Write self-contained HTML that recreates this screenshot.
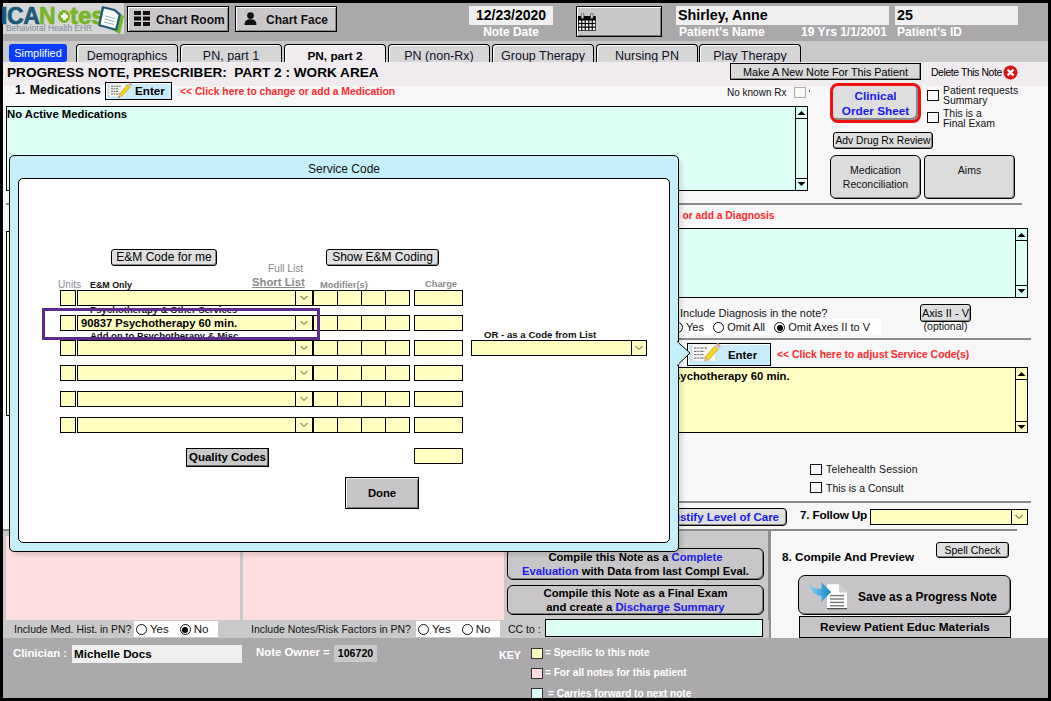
<!DOCTYPE html>
<html><head><meta charset="utf-8">
<style>
*{margin:0;padding:0;box-sizing:border-box}
html,body{width:1051px;height:701px;overflow:hidden;background:#000;font-family:"Liberation Sans",sans-serif;color:#000}
.a{position:absolute}
.b{font-weight:bold}
.nw{white-space:nowrap}
.tab{position:absolute;top:44px;height:18px;width:102px;border:1px solid #000;border-bottom:none;border-radius:4px 4px 0 0;box-shadow:inset 1px 1px 0 #fff;background:#d6d6d6;font-size:12.5px;text-align:center;line-height:22px;color:#101028;overflow:hidden}
.btn{position:absolute;border:1px solid #000;background:#d7d7d7;text-align:center}
.yl{background:#ffffc2}
.dots{background-color:#ffffc2;background-image:radial-gradient(circle at 1.5px 1.5px,rgba(255,255,255,0.8) 0.7px,transparent 0.9px),radial-gradient(circle at 5.5px 5.5px,rgba(255,255,255,0.8) 0.7px,transparent 0.9px);background-size:8px 8px,8px 8px}
.tl{background:#dcfff6}
.rd{display:inline-block;width:11px;height:11px;border:1px solid #111;border-radius:50%;background:#fff;vertical-align:-2px;margin-right:3px;position:relative}
.rd.on::after{content:"";position:absolute;left:1.5px;top:1.5px;width:6px;height:6px;border-radius:50%;background:#000}
.cb{position:absolute;width:12px;height:11px;border:1px solid #111;background:transparent}
</style></head><body>
<div class="a" id="page" style="left:3px;top:3px;width:1045px;height:695px;background:#f7f7f7;overflow:hidden">
</div>
<!-- header -->
<div class="a" style="left:3px;top:3px;width:1045px;height:38px;background:#aaa8aa"></div>
<div class="a" style="left:3px;top:3px;width:121px;height:31px;background:#d6d6d6"></div>
<div class="a" style="left:3px;top:41px;width:1045px;height:21px;background:#c9c9c9"></div>
<div class="a" style="left:3px;top:62px;width:1045px;height:24px;background:#efebef"></div>
<div class="a" style="left:3px;top:638px;width:1045px;height:60px;background:#aba9ab"></div>

<!-- logo -->
<div class="a b nw" style="left:1px;top:3px;font-size:23px;line-height:27px;letter-spacing:-0.4px;color:#1b5a78;-webkit-text-stroke:0.7px #1b5a78">ICA</div>
<div class="a b nw" style="left:39px;top:3px;font-size:23px;line-height:27px;letter-spacing:-0.6px;color:#78b42a;-webkit-text-stroke:0.7px #78b42a">N</div>
<div class="a" style="left:58px;top:10px;width:12px;height:13px;border-radius:50%;background:#78b42a"></div>
<div class="a" style="left:63px;top:13px;width:2.5px;height:7px;background:#fff"></div>
<div class="a" style="left:60.5px;top:15.3px;width:7.5px;height:2.5px;background:#fff"></div>
<div class="a b nw" style="left:70px;top:2px;font-size:24px;line-height:27px;letter-spacing:-0.1px;color:#78b42a;-webkit-text-stroke:0.8px #78b42a">tes</div>
<div class="a nw" style="left:6px;top:23px;font-size:8.4px;line-height:10px;color:#7a8b97">Behavioral Health EHR</div>
<svg class="a" style="left:96px;top:4px" width="29" height="30" viewBox="0 0 29 30">
<polygon points="6,21 24,30 28,12 22,9" fill="#78b42a"/>
<polygon points="6,2 19,5 25,10 21,27 2,22" fill="#1b5a78"/>
<polygon points="8,4.5 18,7 22.5,11 19.3,24.5 4.5,20.5" fill="#fff"/>
<line x1="9" y1="12" x2="19" y2="14.5" stroke="#8ab0cc" stroke-width="1"/>
<line x1="8.5" y1="15" x2="18.5" y2="17.5" stroke="#8ab0cc" stroke-width="1"/>
<line x1="8" y1="18" x2="18" y2="20.5" stroke="#8ab0cc" stroke-width="1"/>
</svg>
<!-- chart room / face -->
<div class="btn" style="left:127px;top:6px;width:102px;height:26px;background:#c9c7c9;border:1px solid #000;box-shadow:inset 1px 1px 0 #fff, inset -1px -1px 0 #888"></div>
<svg class="a" style="left:134px;top:11px" width="16" height="15" viewBox="0 0 16 15"><rect x="0" y="0" width="7" height="4" fill="#111"/><rect x="9" y="0" width="7" height="4" fill="#111"/><rect x="0" y="5.5" width="7" height="4" fill="#111"/><rect x="9" y="5.5" width="7" height="4" fill="#111"/><rect x="0" y="11" width="7" height="4" fill="#111"/><rect x="9" y="11" width="7" height="4" fill="#111"/></svg>
<div class="a b nw" style="left:156px;top:12px;font-size:12px;line-height:16px;color:#111">Chart Room</div>
<div class="btn" style="left:235px;top:6px;width:102px;height:26px;background:#c9c7c9;border:1px solid #000;box-shadow:inset 1px 1px 0 #fff, inset -1px -1px 0 #888"></div>
<svg class="a" style="left:244px;top:12px" width="13" height="13" viewBox="0 0 13 13"><circle cx="6.5" cy="3.6" r="3.4" fill="#111"/><path d="M0.5,13 C0.5,8.5 3,7.2 6.5,7.2 C10,7.2 12.5,8.5 12.5,13 Z" fill="#111"/></svg>
<div class="a b nw" style="left:266px;top:12px;font-size:12px;line-height:16px;color:#111">Chart Face</div>
<!-- date -->
<div class="a" style="left:469px;top:6px;width:84px;height:19px;background:#efefef"></div>
<div class="a b nw" style="left:469px;top:6px;width:84px;text-align:center;font-size:14px;line-height:19px">12/23/2020</div>
<div class="a b nw" style="left:469px;top:24.5px;width:84px;text-align:center;font-size:11.9px;line-height:15px;color:#fff">Note Date</div>
<div class="btn" style="left:576px;top:6px;width:86px;height:31px;background:#c9c7c9;border:1px solid #000;box-shadow:inset 1px 1px 0 #fff, inset -1px -1px 0 #777"></div>
<svg class="a" style="left:578px;top:13px" width="18" height="18" viewBox="0 0 18 18"><rect x="0" y="3" width="17.8" height="14.8" fill="#000"/><rect x="0.8" y="7.499999999999999" width="2.4" height="2.4" fill="#f4f4f4"/><rect x="4.3" y="7.499999999999999" width="2.4" height="2.4" fill="#f4f4f4"/><rect x="7.8" y="7.499999999999999" width="2.4" height="2.4" fill="#f4f4f4"/><rect x="11.3" y="7.499999999999999" width="2.4" height="2.4" fill="#f4f4f4"/><rect x="14.8" y="7.499999999999999" width="2.4" height="2.4" fill="#f4f4f4"/><rect x="0.8" y="11.100000000000001" width="2.4" height="2.4" fill="#f4f4f4"/><rect x="4.3" y="11.100000000000001" width="2.4" height="2.4" fill="#f4f4f4"/><rect x="7.8" y="11.100000000000001" width="2.4" height="2.4" fill="#f4f4f4"/><rect x="11.3" y="11.100000000000001" width="2.4" height="2.4" fill="#f4f4f4"/><rect x="14.8" y="11.100000000000001" width="2.4" height="2.4" fill="#f4f4f4"/><rect x="0.8" y="14.8" width="2.4" height="2.4" fill="#f4f4f4"/><rect x="4.3" y="14.8" width="2.4" height="2.4" fill="#f4f4f4"/><rect x="7.8" y="14.8" width="2.4" height="2.4" fill="#f4f4f4"/><rect x="11.3" y="14.8" width="2.4" height="2.4" fill="#f4f4f4"/><rect x="14.8" y="14.8" width="2.4" height="2.4" fill="#f4f4f4"/><rect x="3.2" y="0.3" width="2.6" height="5.5" rx="1.2" fill="#ccc" stroke="#333" stroke-width="0.6"/><rect x="12.5" y="0.3" width="2.6" height="5.5" rx="1.2" fill="#ccc" stroke="#333" stroke-width="0.6"/></svg>
<!-- patient name -->
<div class="a" style="left:676px;top:6px;width:213px;height:19px;background:#efefef"></div>
<div class="a b nw" style="left:678px;top:6px;font-size:14.3px;line-height:19px">Shirley, Anne</div>
<div class="a b nw" style="left:679px;top:24.5px;font-size:12px;line-height:15px;color:#fff">Patient’s Name</div>
<div class="a b nw" style="left:801px;top:24.5px;font-size:12px;line-height:15px;color:#fff">19 Yrs 1/1/2001</div>
<div class="a" style="left:895px;top:6px;width:123px;height:19px;background:#efefef"></div>
<div class="a b nw" style="left:897px;top:6px;font-size:14.3px;line-height:19px">25</div>
<div class="a b nw" style="left:897px;top:24.5px;font-size:12px;line-height:15px;color:#fff">Patient’s ID</div>
<!-- tabs -->
<div class="a" style="left:9px;top:44px;width:58px;height:18px;background:#0a3cff;border-radius:3px;color:#fff;font-size:11px;line-height:19px;text-align:center">Simplified</div>
<div class="tab" style="left:76px">Demographics</div>
<div class="tab" style="left:180px">PN, part 1</div>
<div class="tab" style="left:284px;background:#f0ecf0;font-weight:bold;color:#000;font-size:11.8px">PN, part 2</div>
<div class="tab" style="left:388px">PN (non-Rx)</div>
<div class="tab" style="left:492px">Group Therapy</div>
<div class="tab" style="left:596px">Nursing PN</div>
<div class="tab" style="left:699px">Play Therapy</div>
<!-- heading -->
<div class="a b nw" style="left:7px;top:64px;font-size:13.6px;line-height:17px">PROGRESS NOTE, PRESCRIBER:&nbsp; PART 2 : WORK AREA</div>
<div class="btn nw" style="left:730px;top:63px;width:191px;height:17px;background:#d9d9d9;font-size:10.8px;line-height:16px;box-shadow:inset -1px -1px 0 #888">Make A New Note For This Patient</div>
<div class="a nw" style="left:931px;top:64.5px;font-size:10.4px;line-height:16px;letter-spacing:-0.4px">Delete This Note</div>
<svg class="a" style="left:1002.5px;top:64.5px" width="15" height="15" viewBox="0 0 15 15"><circle cx="7.5" cy="7.5" r="7" fill="#e01010"/><path d="M4.5,4.5 L10.5,10.5 M10.5,4.5 L4.5,10.5" stroke="#fff" stroke-width="2.4"/></svg>

<!-- medications -->
<div class="a b nw" style="left:15px;top:82px;font-size:12.3px;line-height:16px;word-spacing:1px">1. Medications</div>
<div class="btn" style="left:105px;top:82px;width:67px;height:18px;background:#c8ecfb;box-shadow:inset 1px 1px 0 #fff"></div>
<svg class="a" style="left:108px;top:82px" width="24" height="17" viewBox="0 0 24 17"><rect x="0" y="1" width="18" height="14" fill="#d8d8d8"/><rect x="1.5" y="1.5" width="16" height="13" fill="#fafafa"/><g stroke="#333" stroke-width="0.8" stroke-dasharray="2 0.6 1.5 0.6 2.5 0.6"><line x1="3" y1="4.2" x2="13" y2="4.2"/><line x1="3" y1="6.8" x2="11" y2="6.8"/><line x1="3" y1="9.4" x2="10" y2="9.4"/><line x1="3" y1="12" x2="13" y2="12"/></g><path d="M11.2,12.2 L19.5,2.8 L22.2,5.2 L13.9,14.6 Z" fill="#f2d41c" stroke="#b08a10" stroke-width="0.5"/><path d="M19.5,2.8 L20.8,1.3 L23.5,3.7 L22.2,5.2 Z" fill="#c8c8c8"/><path d="M20.8,1.3 L21.8,0.3 L24,2.5 L23.5,3.7 Z" fill="#e8907a"/><path d="M11.2,12.2 L13.9,14.6 L10.2,16 Z" fill="#e8b890"/><path d="M10.2,16 L11,14.2 L12,15.1 Z" fill="#222"/></svg>
<div class="a b nw" style="left:135px;top:83px;font-size:11.7px;line-height:16px">Enter</div>
<div class="a b nw" style="left:180px;top:85px;font-size:10.3px;line-height:13px;color:#ff2a2a">&lt;&lt; Click here to change or add a Medication</div>
<div class="a nw" style="left:727px;top:86px;font-size:10px;line-height:13px;color:#111">No known Rx</div>
<div class="cb" style="left:794px;top:87px;width:12px;height:11px;border-color:#aaa;background:transparent"></div>
<div class="a" style="left:809px;top:90px;width:1px;height:2px;background:#555"></div>
<div class="a tl" style="left:6px;top:106px;width:802px;height:85px;border:1px solid #000"></div>
<div class="a b nw" style="left:7px;top:107px;font-size:11.3px;line-height:14px">No Active Medications</div>
<div class="a" style="left:795px;top:106px;width:13px;height:85px;border:1px solid #000"></div>
<div class="a" style="left:795px;top:118px;width:13px;height:1px;background:#000"></div>
<div class="a" style="left:795px;top:178px;width:13px;height:1px;background:#000"></div>
<svg class="a" style="left:796px;top:109px" width="11" height="8"><polygon points="1.5,6 5.5,2 9.5,6" fill="#000"/></svg>
<svg class="a" style="left:796px;top:180px" width="11" height="8"><polygon points="1.5,2 5.5,6 9.5,2" fill="#000"/></svg>
<!-- right buttons -->
<div class="a" style="left:830px;top:83px;width:91px;height:40px;border:3px solid #f01010;border-radius:8px;background:#dedede;box-shadow:inset -2px -2px 0 #8a8a8a"></div>
<div class="a b" style="left:830px;top:89px;width:91px;text-align:center;font-size:11.8px;line-height:14.5px;color:#1a1aee">Clinical<br>Order Sheet</div>
<div class="cb" style="left:927px;top:90px"></div>
<div class="cb" style="left:927px;top:112px"></div>
<div class="a nw" style="left:943px;top:86px;font-size:10.4px;line-height:10px;color:#111">Patient requests<br>Summary</div>
<div class="a nw" style="left:943px;top:109px;font-size:10.4px;line-height:10px;color:#111">This is a<br>Final Exam</div>
<div class="btn nw" style="left:833px;top:132px;width:100px;height:17px;border-radius:3px;background:#dedede;font-size:10.3px;line-height:15px;box-shadow:inset -1px -1px 0 #888">Adv Drug Rx Review</div>
<div class="btn" style="left:830px;top:155px;width:91px;height:44px;border-radius:6px;background:#dcdcdc;font-size:10.5px;line-height:13.5px;padding-top:8px;color:#111;box-shadow:inset -1px -1px 0 #888">Medication<br>Reconciliation</div>
<div class="btn" style="left:924px;top:155px;width:91px;height:44px;border-radius:4px;background:#dcdcdc;font-size:10.5px;line-height:13.5px;padding-top:8px;color:#111;box-shadow:inset -1px -1px 0 #888">Aims</div>
<div class="a" style="left:6px;top:203px;width:1016px;height:2px;background:#8a8a8a"></div>
<!-- diagnosis -->
<div class="a b nw" style="left:564px;top:209px;font-size:10.3px;line-height:13px;color:#ff2a2a">&lt;&lt; Click here to change or add a Diagnosis</div>
<div class="a yl" style="left:6px;top:231px;width:40px;height:185px;border:1px solid #000"></div>
<div class="a tl" style="left:60px;top:228px;width:968px;height:70px;border:1px solid #000"></div>
<div class="a" style="left:1015px;top:228px;width:13px;height:70px;border:1px solid #000"></div>
<div class="a" style="left:1015px;top:240px;width:13px;height:1px;background:#000"></div>
<div class="a" style="left:1015px;top:285px;width:13px;height:1px;background:#000"></div>
<svg class="a" style="left:1016px;top:231px" width="11" height="8"><polygon points="1.5,6 5.5,2 9.5,6" fill="#000"/></svg>
<svg class="a" style="left:1016px;top:287px" width="11" height="8"><polygon points="1.5,2 5.5,6 9.5,2" fill="#000"/></svg>
<div class="a nw" style="left:680px;top:307px;font-size:11px;line-height:13px;color:#111">Include Diagnosis in the note?</div>
<div class="a" style="left:600px;top:319px;width:281px;height:16px;background:#fff"></div>
<div class="a nw" style="left:600px;top:320px;font-size:11px;line-height:14px;color:#111"><span style="display:inline-block;width:72px"></span><span class="rd"></span>Yes&nbsp;&nbsp;&nbsp;<span class="rd"></span>Omit All&nbsp;&nbsp;&nbsp;<span class="rd on"></span>Omit Axes II to V</div>
<div class="btn nw" style="left:920px;top:304px;width:51px;height:18px;border-radius:3px;background:#dedede;font-size:11px;line-height:16px;box-shadow:inset -1px -1px 0 #888">Axis II - V</div>
<div class="a nw" style="left:915px;top:320px;width:61px;text-align:center;font-size:10.5px;line-height:13px;color:#111">(optional)</div>
<div class="a" style="left:60px;top:338px;width:971px;height:2px;background:#8a8a8a"></div>
<!-- service codes -->
<div class="btn" style="left:687px;top:343px;width:84px;height:23px;background:#c8ecfb;box-shadow:inset 1px 1px 0 #fff"></div>
<svg class="a" style="left:690px;top:342px" width="32" height="22" viewBox="0 0 24 16.5"><rect x="0.5" y="2" width="18.5" height="12.5" fill="#d8d8d8"/><rect x="1.8" y="2.3" width="17" height="11.8" fill="#fafafa"/><g stroke="#333" stroke-width="0.6" stroke-dasharray="2 0.6 1.5 0.6 2.5 0.6"><line x1="3" y1="4.5" x2="13" y2="4.5"/><line x1="3" y1="7" x2="11" y2="7"/><line x1="3" y1="9.5" x2="10" y2="9.5"/><line x1="3" y1="12" x2="13" y2="12"/></g><path d="M11.2,11.2 L18.5,3 L21.2,5.4 L13.9,13.6 Z" fill="#f2d41c" stroke="#b08a10" stroke-width="0.4"/><path d="M18.5,3 L19.8,1.5 L22.5,3.9 L21.2,5.4 Z" fill="#c8c8c8"/><path d="M19.8,1.5 L20.8,0.5 L23,2.7 L22.5,3.9 Z" fill="#e8907a"/><path d="M11.2,11.2 L13.9,13.6 L10.2,15 Z" fill="#e8b890"/></svg>
<div class="a b nw" style="left:728px;top:347px;font-size:11.4px;line-height:16px">Enter</div>
<div class="a b nw" style="left:777px;top:348px;font-size:10.4px;line-height:13px;color:#ff2a2a">&lt;&lt; Click here to adjust Service Code(s)</div>
<div class="a dots" style="left:60px;top:367px;width:968px;height:66px;border:1px solid #000"></div>
<div class="a b nw" style="left:632px;top:369px;font-size:11.3px;line-height:14px">90837 Psychotherapy 60 min.</div>
<div class="a" style="left:1015px;top:367px;width:13px;height:66px;border:1px solid #000"></div>
<div class="a" style="left:1015px;top:379px;width:13px;height:1px;background:#000"></div>
<div class="a" style="left:1015px;top:421px;width:13px;height:1px;background:#000"></div>
<svg class="a" style="left:1016px;top:370px" width="11" height="8"><polygon points="1.5,6 5.5,2 9.5,6" fill="#000"/></svg>
<svg class="a" style="left:1016px;top:423px" width="11" height="8"><polygon points="1.5,2 5.5,6 9.5,2" fill="#000"/></svg>
<div class="cb" style="left:810px;top:464px"></div>
<div class="cb" style="left:810px;top:482px"></div>
<div class="a nw" style="left:826px;top:463px;font-size:10.5px;line-height:13px;letter-spacing:0.2px;color:#111">Telehealth Session</div>
<div class="a nw" style="left:826px;top:482px;font-size:10.5px;line-height:13px;color:#111">This is a Consult</div>
<div class="a" style="left:60px;top:501px;width:971px;height:2px;background:#8a8a8a"></div>
<div class="btn nw" style="left:500px;top:508px;width:287px;height:18px;border-radius:4px;background:#e0e0e0;font-size:11.5px;line-height:16px;text-align:right;padding-right:7px;color:#1a1aee;font-weight:bold;box-shadow:inset -1px -1px 0 #888">Justify Level of Care</div>
<div class="a b nw" style="left:800px;top:507px;font-size:11.8px;line-height:16px;letter-spacing:-0.2px">7. Follow Up</div>
<div class="a yl" style="left:870px;top:509px;width:158px;height:16px;border:1px solid #000"></div>
<div class="a" style="left:1011px;top:509px;width:17px;height:16px;border-left:1px solid #000"></div>
<svg class="a" style="left:1014px;top:513px" width="10" height="8"><polyline points="1.5,2 5,5.5 8.5,2" fill="none" stroke="#333" stroke-width="1"/></svg>
<div class="a" style="left:3px;top:529px;width:1014px;height:2px;background:#8a8a8a"></div>

<!-- lower area -->
<div class="a" style="left:3px;top:531px;width:766px;height:107px;background:#c9c9c9"></div>
<div class="a" style="left:768px;top:531px;width:3px;height:107px;background:#8f8f8f"></div>
<div class="a" style="left:6px;top:536px;width:234px;height:84px;background:#fddddd"></div>
<div class="a" style="left:243px;top:536px;width:261px;height:84px;background:#fddddd"></div>
<div class="btn" style="left:507px;top:548px;width:257px;height:32px;border-radius:6px;background:#c8c6c8;font-weight:bold;font-size:11.2px;line-height:14px;padding-top:1px;box-shadow:inset -1px -1px 0 #777">Compile this Note as a <span style="color:#1a1aee">Complete</span><br><span style="color:#1a1aee">Evaluation</span> with Data from last Compl Eval.</div>
<div class="btn" style="left:507px;top:585px;width:257px;height:30px;border-radius:6px;background:#c8c6c8;font-weight:bold;font-size:11.3px;line-height:14px;padding-top:0px;box-shadow:inset -1px -1px 0 #777">Compile this Note as a Final Exam<br>and create a <span style="color:#1a1aee">Discharge Summary</span></div>
<div class="a" style="left:3px;top:620px;width:766px;height:18px;background:#c9c9c9"></div>
<div class="a nw" style="left:14px;top:623px;font-size:10.4px;line-height:13px;color:#111">Include Med. Hist. in PN?</div>
<div class="a" style="left:134px;top:621px;width:84px;height:16px;background:#fff"></div>
<div class="a nw" style="left:136px;top:622px;font-size:11.5px;line-height:14px;color:#111"><span class="rd"></span>Yes<span style="display:inline-block;width:11px"></span><span class="rd on"></span>No</div>
<div class="a nw" style="left:251px;top:623px;font-size:10.5px;line-height:13px;color:#111">Include Notes/Risk Factors in PN?</div>
<div class="a" style="left:416px;top:621px;width:84px;height:16px;background:#fff"></div>
<div class="a nw" style="left:418px;top:622px;font-size:11.5px;line-height:14px;color:#111"><span class="rd"></span>Yes<span style="display:inline-block;width:11px"></span><span class="rd"></span>No</div>
<div class="a nw" style="left:508px;top:623px;font-size:10.5px;line-height:13px;color:#111">CC to :</div>
<div class="a tl" style="left:545px;top:619px;width:218px;height:18px;border:1px solid #000"></div>
<!-- right compile -->
<div class="btn nw" style="left:936px;top:542px;width:73px;height:16px;border-radius:3px;background:#e0e0e0;font-size:10.5px;line-height:14px;box-shadow:inset -1px -1px 0 #888">Spell Check</div>
<div class="a b nw" style="left:782px;top:550px;font-size:11.7px;line-height:14px">8. Compile And Preview</div>
<div class="btn" style="left:798px;top:575px;width:213px;height:40px;border-radius:7px;background:#c6c4c6;box-shadow:inset -1px -1px 0 #777"></div>
<svg class="a" style="left:806px;top:580px" width="44" height="32" viewBox="0 0 44 32"><defs><linearGradient id="ag" x1="0" x2="1" y1="0" y2="0"><stop offset="0" stop-color="#80d4fa"/><stop offset="1" stop-color="#1682c2"/></linearGradient></defs><path d="M21,4.3 L33,4.3 L41,12.5 L41,28.2 L21,28.2 Z" fill="#fdfdfd"/><path d="M33,4.3 L33,12.5 L41,12.5 Z" fill="#d0d0d0"/><rect x="21" y="28" width="20" height="1.3" fill="#555"/><g stroke="#777" stroke-width="1.4"><line x1="24" y1="15.6" x2="38" y2="15.6"/><line x1="24" y1="19" x2="38" y2="19"/><line x1="24" y1="22.4" x2="38" y2="22.4"/><line x1="24" y1="25.8" x2="38" y2="25.8"/></g><path d="M3,4 C5,12 9,15.5 15.5,16 L15.5,22 L25,12 L15.5,2.3 L15.5,8.5 C10,9.5 6,8 3,4 Z" fill="url(#ag)"/></svg>
<div class="a b nw" style="left:858px;top:590px;font-size:11.9px;line-height:15px">Save as a Progress Note</div>
<div class="btn b nw" style="left:799px;top:616px;width:212px;height:22px;background:#c6c4c6;font-size:11.8px;line-height:20px">Review Patient Educ Materials</div>
<!-- bottom bar -->
<div class="a b nw" style="left:13px;top:646px;font-size:11.3px;line-height:15px;color:#fff">Clinician :</div>
<div class="a" style="left:72px;top:645px;width:170px;height:18px;background:#efefef"></div>
<div class="a b nw" style="left:74px;top:646px;font-size:11.65px;line-height:15px">Michelle Docs</div>
<div class="a b nw" style="left:256px;top:645px;font-size:11.4px;line-height:14px;color:#fff">Note Owner =</div>
<div class="a" style="left:334px;top:645px;width:43px;height:17px;background:#c9c9c9"></div>
<div class="a b nw" style="left:334px;top:645px;width:43px;text-align:center;font-size:10.6px;line-height:17px">106720</div>
<div class="a b nw" style="left:499px;top:648px;font-size:10.7px;line-height:14px;color:#fff">KEY</div>
<div class="a yl" style="left:531px;top:648px;width:12px;height:11px;border:1px solid #333"></div>
<div class="a" style="left:531px;top:668px;width:12px;height:11px;border:1px solid #333;background:#fddddd"></div>
<div class="a tl" style="left:531px;top:688px;width:12px;height:11px;border:1px solid #333"></div>
<div class="a b nw" style="left:545px;top:647px;font-size:10.1px;line-height:12px;color:#fff">= Specific to this note</div>
<div class="a b nw" style="left:545px;top:667px;font-size:10.1px;line-height:12px;color:#fff">= For all notes for this patient</div>
<div class="a b nw" style="left:548px;top:688px;font-size:10.1px;line-height:12px;color:#fff">= Carries forward to next note</div>
<div class="a" style="left:0;top:698px;width:1051px;height:3px;background:#000"></div>

<!-- modal -->
<div class="a" style="left:12px;top:159px;width:670px;height:396px;border-radius:6px;background:rgba(0,0,0,0.12);filter:blur(2px)"></div>
<div class="a" style="left:9px;top:155px;width:670px;height:397px;border:1px solid #000;border-radius:5px;background:#c6effc"></div>
<svg class="a" style="left:677px;top:341px" width="14" height="25" viewBox="0 0 14 25"><polygon points="0,0.5 13,12 0,24.5" fill="#c6effc" stroke="#000" stroke-width="1"/><rect x="0" y="1.5" width="2" height="22" fill="#c6effc"/></svg>
<div class="a nw" style="left:9px;top:161.5px;width:670px;text-align:center;font-size:12px;line-height:15px;color:#111">Service Code</div>
<div class="a" style="left:18px;top:178px;width:652px;height:365px;border:1px solid #000;border-radius:5px;background:#fff"></div>
<div class="btn nw" style="left:111px;top:249px;width:106px;height:17px;border-radius:3px;background:#e0e0e0;font-size:12px;line-height:15px;box-shadow:inset -1px -1px 0 #888">E&amp;M Code for me</div>
<div class="btn nw" style="left:326px;top:249px;width:113px;height:17px;border-radius:3px;background:#e0e0e0;font-size:12px;line-height:15px;box-shadow:inset -1px -1px 0 #888">Show E&amp;M Coding</div>
<div class="a nw" style="left:268px;top:263px;font-size:10.2px;line-height:12px;color:#8a8a8a">Full List</div>
<div class="a b nw" style="left:252px;top:276px;font-size:11.3px;line-height:13px;color:#8a8a8a;text-decoration:underline">Short List</div>
<div class="a nw" style="left:58px;top:279px;font-size:10.1px;line-height:12px;color:#8a8a9a">Units</div>
<div class="a b nw" style="left:90px;top:280px;font-size:8.9px;line-height:11px;color:#111">E&amp;M Only</div>
<div class="a b nw" style="left:320px;top:279px;font-size:9.4px;line-height:11px;color:#8a8a8a">Modifier(s)</div>
<div class="a b nw" style="left:425px;top:279px;font-size:9.3px;line-height:11px;color:#8a8a8a">Charge</div>
<div class="a b nw" style="left:90px;top:304px;font-size:9.5px;line-height:11px;color:#111">Psychotherapy &amp; Other Services</div>
<div class="a b nw" style="left:90px;top:330px;font-size:9.5px;line-height:11px;color:#111">Add on to Psychotherapy &amp; Misc</div>
<div class="a yl" style="left:60px;top:290px;width:16px;height:16px;border:1px solid #000"></div>
<div class="a yl" style="left:77px;top:290px;width:236px;height:16px;border:1px solid #000"></div>
<div class="a" style="left:295px;top:290px;width:1px;height:16px;background:#000"></div>
<svg class="a" style="left:299px;top:294px" width="10" height="8"><polyline points="1.5,2 5,5.5 8.5,2" fill="none" stroke="#444" stroke-width="1"/></svg>
<div class="a yl" style="left:313px;top:290px;width:97px;height:16px;border:1px solid #000"></div>
<div class="a" style="left:337px;top:290px;width:1px;height:16px;background:#000"></div>
<div class="a" style="left:361px;top:290px;width:1px;height:16px;background:#000"></div>
<div class="a" style="left:385px;top:290px;width:1px;height:16px;background:#000"></div>
<div class="a yl" style="left:414px;top:290px;width:49px;height:16px;border:1px solid #000"></div>
<div class="a yl" style="left:60px;top:315px;width:16px;height:16px;border:1px solid #000"></div>
<div class="a yl" style="left:77px;top:315px;width:236px;height:16px;border:1px solid #000"></div>
<div class="a" style="left:295px;top:315px;width:1px;height:16px;background:#000"></div>
<svg class="a" style="left:299px;top:319px" width="10" height="8"><polyline points="1.5,2 5,5.5 8.5,2" fill="none" stroke="#444" stroke-width="1"/></svg>
<div class="a yl" style="left:313px;top:315px;width:97px;height:16px;border:1px solid #000"></div>
<div class="a" style="left:337px;top:315px;width:1px;height:16px;background:#000"></div>
<div class="a" style="left:361px;top:315px;width:1px;height:16px;background:#000"></div>
<div class="a" style="left:385px;top:315px;width:1px;height:16px;background:#000"></div>
<div class="a yl" style="left:414px;top:315px;width:49px;height:16px;border:1px solid #000"></div>
<div class="a yl" style="left:60px;top:340px;width:16px;height:16px;border:1px solid #000"></div>
<div class="a yl" style="left:77px;top:340px;width:236px;height:16px;border:1px solid #000"></div>
<div class="a" style="left:295px;top:340px;width:1px;height:16px;background:#000"></div>
<svg class="a" style="left:299px;top:344px" width="10" height="8"><polyline points="1.5,2 5,5.5 8.5,2" fill="none" stroke="#444" stroke-width="1"/></svg>
<div class="a yl" style="left:313px;top:340px;width:97px;height:16px;border:1px solid #000"></div>
<div class="a" style="left:337px;top:340px;width:1px;height:16px;background:#000"></div>
<div class="a" style="left:361px;top:340px;width:1px;height:16px;background:#000"></div>
<div class="a" style="left:385px;top:340px;width:1px;height:16px;background:#000"></div>
<div class="a yl" style="left:414px;top:340px;width:49px;height:16px;border:1px solid #000"></div>
<div class="a yl" style="left:60px;top:365px;width:16px;height:16px;border:1px solid #000"></div>
<div class="a yl" style="left:77px;top:365px;width:236px;height:16px;border:1px solid #000"></div>
<div class="a" style="left:295px;top:365px;width:1px;height:16px;background:#000"></div>
<svg class="a" style="left:299px;top:369px" width="10" height="8"><polyline points="1.5,2 5,5.5 8.5,2" fill="none" stroke="#444" stroke-width="1"/></svg>
<div class="a yl" style="left:313px;top:365px;width:97px;height:16px;border:1px solid #000"></div>
<div class="a" style="left:337px;top:365px;width:1px;height:16px;background:#000"></div>
<div class="a" style="left:361px;top:365px;width:1px;height:16px;background:#000"></div>
<div class="a" style="left:385px;top:365px;width:1px;height:16px;background:#000"></div>
<div class="a yl" style="left:414px;top:365px;width:49px;height:16px;border:1px solid #000"></div>
<div class="a yl" style="left:60px;top:391px;width:16px;height:16px;border:1px solid #000"></div>
<div class="a yl" style="left:77px;top:391px;width:236px;height:16px;border:1px solid #000"></div>
<div class="a" style="left:295px;top:391px;width:1px;height:16px;background:#000"></div>
<svg class="a" style="left:299px;top:395px" width="10" height="8"><polyline points="1.5,2 5,5.5 8.5,2" fill="none" stroke="#444" stroke-width="1"/></svg>
<div class="a yl" style="left:313px;top:391px;width:97px;height:16px;border:1px solid #000"></div>
<div class="a" style="left:337px;top:391px;width:1px;height:16px;background:#000"></div>
<div class="a" style="left:361px;top:391px;width:1px;height:16px;background:#000"></div>
<div class="a" style="left:385px;top:391px;width:1px;height:16px;background:#000"></div>
<div class="a yl" style="left:414px;top:391px;width:49px;height:16px;border:1px solid #000"></div>
<div class="a yl" style="left:60px;top:417px;width:16px;height:16px;border:1px solid #000"></div>
<div class="a yl" style="left:77px;top:417px;width:236px;height:16px;border:1px solid #000"></div>
<div class="a" style="left:295px;top:417px;width:1px;height:16px;background:#000"></div>
<svg class="a" style="left:299px;top:421px" width="10" height="8"><polyline points="1.5,2 5,5.5 8.5,2" fill="none" stroke="#444" stroke-width="1"/></svg>
<div class="a yl" style="left:313px;top:417px;width:97px;height:16px;border:1px solid #000"></div>
<div class="a" style="left:337px;top:417px;width:1px;height:16px;background:#000"></div>
<div class="a" style="left:361px;top:417px;width:1px;height:16px;background:#000"></div>
<div class="a" style="left:385px;top:417px;width:1px;height:16px;background:#000"></div>
<div class="a yl" style="left:414px;top:417px;width:49px;height:16px;border:1px solid #000"></div>

<div class="a b nw" style="left:81px;top:316px;font-size:11.2px;line-height:14px">90837 Psychotherapy 60 min.</div>
<div class="a" style="left:42px;top:308px;width:278px;height:32px;border:3px solid #5e2a8e"></div>
<div class="a b nw" style="left:484px;top:329px;font-size:9.65px;line-height:11px;color:#111">OR - as a Code from List</div>
<div class="a yl" style="left:471px;top:340px;width:176px;height:16px;border:1px solid #000"></div>
<div class="a" style="left:631px;top:340px;width:1px;height:16px;background:#000"></div>
<svg class="a" style="left:634px;top:344px" width="10" height="8"><polyline points="1.5,2 5,5.5 8.5,2" fill="none" stroke="#444" stroke-width="1"/></svg>
<div class="a yl" style="left:414px;top:448px;width:49px;height:16px;border:1px solid #000"></div>
<div class="btn b nw" style="left:186px;top:448px;width:83px;height:19px;background:#c9c9c9;font-size:11.45px;line-height:17px;box-shadow:inset -1px -1px 0 #666">Quality Codes</div>
<div class="btn b nw" style="left:345px;top:477px;width:74px;height:32px;background:#c7c5c7;font-size:11.3px;line-height:30px;box-shadow:inset 1px 1px 0 #eee, inset -1px -1px 0 #777">Done</div>
</body></html>
